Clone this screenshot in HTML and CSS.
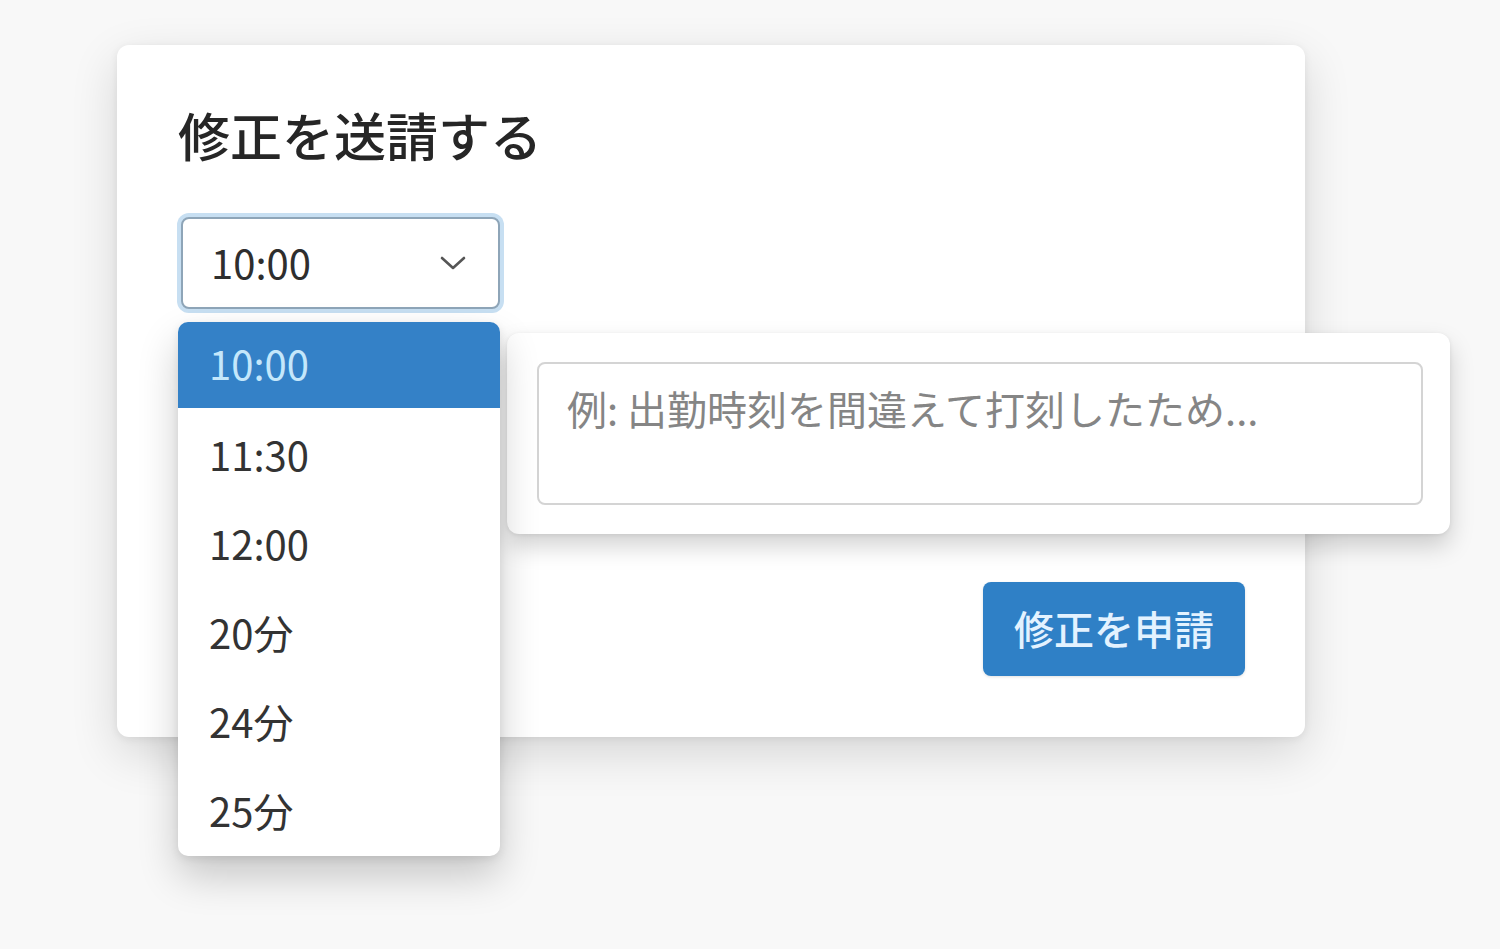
FILE: index.html
```html
<!DOCTYPE html>
<html lang="ja">
<head>
<meta charset="utf-8">
<title>修正を送請する</title>
<link rel="stylesheet" href="styles.css">
</head>
<body>
<main class="stage">
  <section class="card">
    <h1 class="title">修正を送請する</h1>
    <div class="select-wrap">
      <div class="select">
        <span class="select-value">10:00</span>
        <svg class="chevron" width="26" height="14" viewBox="0 0 26 14" aria-hidden="true">
          <path d="M2 2 L13 12 L24 2" fill="none" stroke="#555" stroke-width="2.6" stroke-linecap="round" stroke-linejoin="round"/>
        </svg>
      </div>
      <ul class="options">
        <li class="option is-active">10:00</li>
        <li class="option">11:30</li>
        <li class="option">12:00</li>
        <li class="option">20分</li>
        <li class="option">24分</li>
        <li class="option">25分</li>
      </ul>
    </div>
    <div class="actions">
      <button class="btn" type="button">修正を申請</button>
    </div>
    <div class="reason-pop">
      <div class="textarea">
        <span class="placeholder">例: 出勤時刻を間違えて打刻したため...</span>
      </div>
    </div>
  </section>
</main>
</body>
</html>
```

FILE: styles.css
```css
* { box-sizing: border-box; }

html, body {
  margin: 0;
  padding: 0;
}

body {
  width: 1500px;
  height: 949px;
  overflow: hidden;
  background: #f8f8f8;
  font-family: "Noto Sans CJK JP", "Noto Sans", sans-serif;
  color: #2b2b2b;
}

.stage {
  padding: 45px 0 0 117px;
}

.card {
  position: relative;
  width: 1188px;
  height: 692px;
  padding: 64px 60px 61px 61px;
  display: flex;
  flex-direction: column;
  align-items: flex-start;
  background: #ffffff;
  border-radius: 12px;
  box-shadow: 0 16px 48px rgba(0, 0, 0, 0.14), 0 2px 8px rgba(0, 0, 0, 0.07);
}

.title {
  margin: 0;
  font-size: 52px;
  line-height: 52px;
  font-weight: 500;
  color: #262626;
  letter-spacing: 0;
}

.select-wrap {
  position: relative;
  margin: 56px 0 0 3px;
}

.select {
  width: 319px;
  height: 92px;
  display: flex;
  align-items: center;
  justify-content: space-between;
  padding: 0 32px 3px 28px;
  background: #ffffff;
  border: 2px solid #8ea5b8;
  border-radius: 8px;
  box-shadow: 0 0 0 4px #c7dff2;
}

.select-value {
  font-size: 40px;
  line-height: 40px;
  color: #2e2e2e;
}

.chevron {
  display: block;
  margin-top: 2px;
}

.options {
  position: absolute;
  top: 105px;
  left: -3px;
  width: 322px;
  margin: 0;
  padding: 0;
  list-style: none;
  background: #ffffff;
  border-radius: 10px;
  overflow: hidden;
  z-index: 3;
  box-shadow: 0 20px 40px rgba(0, 0, 0, 0.2), 0 3px 10px rgba(0, 0, 0, 0.09);
}

.option {
  height: 89px;
  display: flex;
  align-items: center;
  padding: 0 0 4px 31px;
  font-size: 40px;
  line-height: 40px;
  color: #333333;
}

.option.is-active {
  height: 86px;
  margin-bottom: 3px;
  background: #3481c7;
  color: #c4e7fb;
}

.actions {
  margin-top: auto;
  align-self: stretch;
  display: flex;
  justify-content: flex-end;
}

.btn {
  width: 262px;
  height: 94px;
  padding: 0 0 2px;
  border: none;
  border-radius: 8px;
  background: #2f80c6;
  color: #e3f2ff;
  font-family: "Noto Sans CJK JP", "Noto Sans", sans-serif;
  font-size: 40px;
  font-weight: 500;
  line-height: 40px;
  box-shadow: 0 1px 3px rgba(0, 0, 0, 0.12);
}

.reason-pop {
  position: absolute;
  left: 390px;
  top: 288px;
  width: 943px;
  height: 201px;
  padding: 29px 27px 29px 30px;
  background: #ffffff;
  border-radius: 12px;
  z-index: 2;
  box-shadow: 0 12px 24px rgba(0, 0, 0, 0.18), 0 1px 4px rgba(0, 0, 0, 0.08);
}

.textarea {
  width: 100%;
  height: 100%;
  padding: 24px 28px;
  border: 2px solid #d4d4d4;
  border-radius: 8px;
  background: #ffffff;
}

.placeholder {
  display: block;
  font-size: 40px;
  line-height: 40px;
  color: #858585;
}
```
